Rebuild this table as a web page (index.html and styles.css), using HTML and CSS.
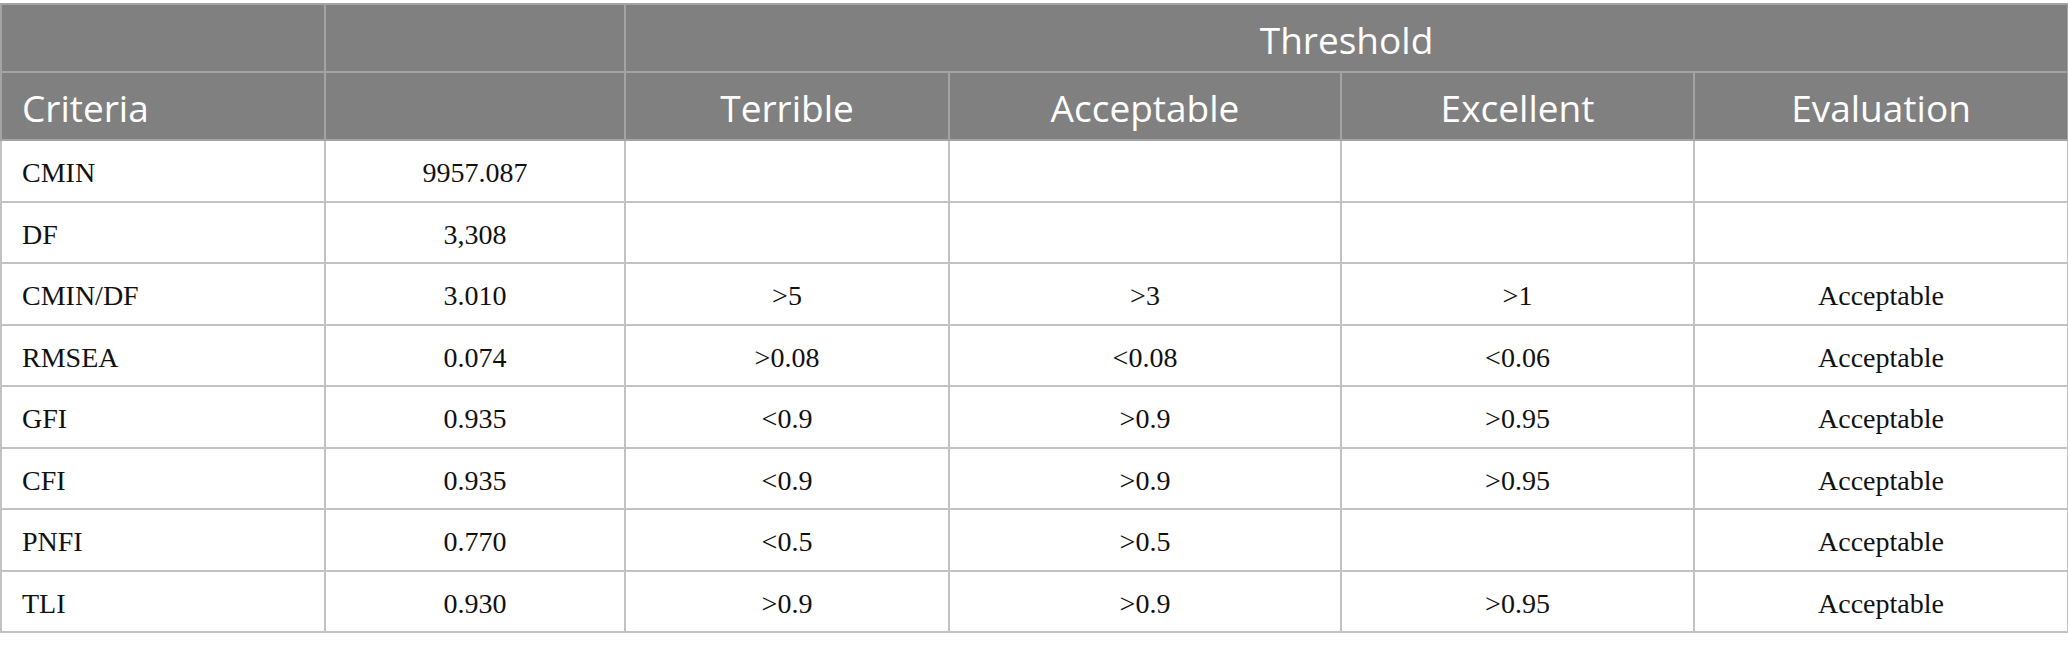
FILE: index.html
```html
<!DOCTYPE html>
<html>
<head>
<meta charset="utf-8">
<link rel="stylesheet" href="styles.css">
</head>
<body>
<div class="wrap">
<table class="fit">
  <colgroup>
    <col class="c1"><col class="c2"><col class="c3"><col class="c4"><col class="c5"><col class="c6">
  </colgroup>
  <thead>
    <tr class="h1">
      <th></th><th></th><th colspan="4">Threshold</th>
    </tr>
    <tr class="h2">
      <th class="left">Criteria</th><th></th><th>Terrible</th><th>Acceptable</th><th>Excellent</th><th>Evaluation</th>
    </tr>
  </thead>
  <tbody>
    <tr><td class="left">CMIN</td><td>9957.087</td><td></td><td></td><td></td><td></td></tr>
    <tr><td class="left">DF</td><td>3,308</td><td></td><td></td><td></td><td></td></tr>
    <tr><td class="left">CMIN/DF</td><td>3.010</td><td>&gt;5</td><td>&gt;3</td><td>&gt;1</td><td>Acceptable</td></tr>
    <tr><td class="left">RMSEA</td><td>0.074</td><td>&gt;0.08</td><td>&lt;0.08</td><td>&lt;0.06</td><td>Acceptable</td></tr>
    <tr><td class="left">GFI</td><td>0.935</td><td>&lt;0.9</td><td>&gt;0.9</td><td>&gt;0.95</td><td>Acceptable</td></tr>
    <tr><td class="left">CFI</td><td>0.935</td><td>&lt;0.9</td><td>&gt;0.9</td><td>&gt;0.95</td><td>Acceptable</td></tr>
    <tr><td class="left">PNFI</td><td>0.770</td><td>&lt;0.5</td><td>&gt;0.5</td><td></td><td>Acceptable</td></tr>
    <tr><td class="left">TLI</td><td>0.930</td><td>&gt;0.9</td><td>&gt;0.9</td><td>&gt;0.95</td><td>Acceptable</td></tr>
  </tbody>
</table>
</div>
</body>
</html>
```

FILE: styles.css
```css
html, body {
  margin: 0;
  padding: 0;
  background: #ffffff;
}
.wrap {
  padding-top: 3px;
}
.fit {
  border-collapse: collapse;
  table-layout: fixed;
  width: 2067px;
}
.c1 { width: 324px; }
.c2 { width: 300px; }
.c3 { width: 324px; }
.c4 { width: 392px; }
.c5 { width: 353px; }
.c6 { width: 374px; }

.fit th {
  background: #7f807f;
  color: #ffffff;
  font-family: "Open Sans", "Noto Sans", sans-serif;
  font-weight: 400;
  font-size: 37px;
  text-align: center;
  border: 2px solid #a2a3a2;
  padding: 2px 20px 0;
  height: 68px;
  box-sizing: border-box;
}

.fit td {
  font-family: "Liberation Serif", "Times New Roman", serif;
  font-size: 28px;
  color: #111111;
  text-align: center;
  border: 2px solid #c2c2c2;
  padding: 5px 20px 0;
  height: 61.5px;
  box-sizing: border-box;
}
.fit .left {
  text-align: left;
}
```
